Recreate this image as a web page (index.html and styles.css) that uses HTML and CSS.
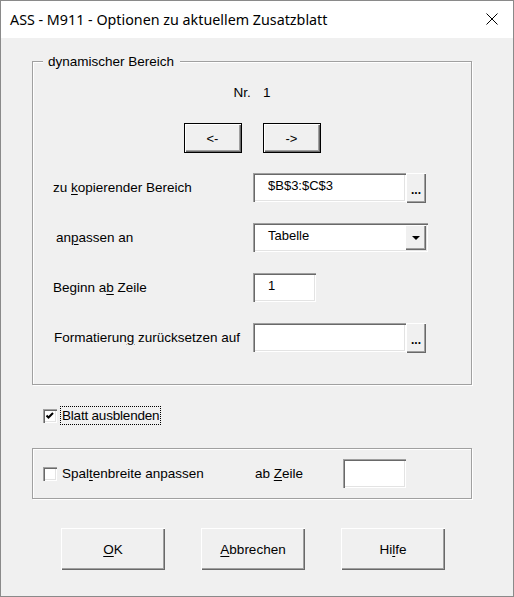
FILE: index.html
```html
<!DOCTYPE html>
<html lang="de">
  <head>
    <meta charset="UTF-8" />
    <title>ASS - M911 - Optionen zu aktuellem Zusatzblatt</title>
    <link rel="stylesheet" href="styles.css">
  </head>
  <body>
    <div class="window">
      <!-- Title bar -->
      <div class="titlebar">
        <span class="title">ASS - M911 - Optionen zu aktuellem Zusatzblatt</span>
        <svg class="close" width="12" height="12" viewBox="0 0 12 12">
          <path d="M0.5 0.5 L11.5 11.5 M11.5 0.5 L0.5 11.5" stroke="#000" stroke-width="1" fill="none" />
        </svg>
      </div>

      <div class="client">
        <!-- dynamischer Bereich -->
        <div class="frame frame-main">
          <span class="legend">dynamischer Bereich</span>

          <div class="nr-row">
            <span>Nr.</span>
            <span>1</span>
          </div>

          <div class="nav-row">
            <button class="btn btn-framed nav-btn">&lt;-</button>
            <button class="btn btn-framed nav-btn">-&gt;</button>
          </div>

          <div class="form-grid">
            <label class="label">zu <u>k</u>opierender Bereich</label>
            <div class="field-group">
              <div class="sunken textbox textbox-wide">$B$3:$C$3</div>
              <button class="btn dots-btn">...</button>
            </div>

            <label class="label label-shift3">an<u>p</u>assen an</label>
            <div class="sunken combo">
              <span class="combo-text">Tabelle</span>
              <span class="btn combo-btn"><span class="arrow"></span></span>
            </div>

            <label class="label">Beginn a<u>b</u> Zeile</label>
            <div class="sunken textbox textbox-small">1</div>

            <label class="label label-shift1">Formatierun<u>g</u> zurücksetzen auf</label>
            <div class="field-group">
              <div class="sunken textbox textbox-wide"></div>
              <button class="btn dots-btn">...</button>
            </div>
          </div>
        </div>

        <!-- Blatt ausblenden -->
        <div class="check-row">
          <span class="sunken checkbox">
            <svg width="10" height="10" viewBox="0 0 10 10">
              <polyline points="1.5,4.5 3.5,6.5 8,2" stroke="#000" stroke-width="2" fill="none" />
            </svg>
          </span>
          <span class="focus-label">Blatt ausblenden</span>
        </div>

        <!-- Spaltenbreite -->
        <div class="frame frame-cols">
          <span class="sunken checkbox"></span>
          <span class="cols-label">Spal<u>t</u>enbreite anpassen</span>
          <span class="zeile-label">ab <u>Z</u>eile</span>
          <div class="sunken textbox textbox-small"></div>
        </div>

        <!-- Dialog buttons -->
        <div class="button-row">
          <button class="btn dialog-btn"><u>O</u>K</button>
          <button class="btn dialog-btn"><u>A</u>bbrechen</button>
          <button class="btn dialog-btn">Hi<u>l</u>fe</button>
        </div>
      </div>
    </div>
  </body>
</html>
```

FILE: styles.css
```css
/* Reset */
* {
  margin: 0;
  padding: 0;
  box-sizing: border-box;
}

body {
  font-family: "Liberation Sans", Arial, sans-serif;
  font-size: 13.5px;
  color: #000;
  background: #fff;
}

u {
  text-decoration: underline;
  text-underline-offset: 2px;
}

.window {
  width: 514px;
  height: 597px;
  border: 1px solid #8a8a8a;
  display: flex;
  flex-direction: column;
}

.titlebar {
  height: 37px;
  background: #fff;
  display: flex;
  align-items: center;
  padding-left: 9px;
}

.title {
  font-family: "Noto Sans", sans-serif;
  font-size: 14.3px;
}

.close {
  margin-left: auto;
  margin-right: 15px;
  align-self: flex-start;
  margin-top: 12px;
}

.client {
  flex: 1;
  background: #f0f0f0;
  padding: 23px 0 0 31px;
}

/* Etched group frame */
.frame {
  position: relative;
  width: 440px;
  border: 1px solid #a0a0a0;
  box-shadow: inset 1px 1px #fff, 1px 1px #fff;
}

.frame-main {
  height: 324px;
  padding-top: 23px;
}

.legend {
  position: absolute;
  top: -8px;
  left: 10px;
  padding: 0 6px 0 5px;
  line-height: 16px;
  background: #f0f0f0;
}

.nr-row {
  display: flex;
  justify-content: center;
  gap: 12px;
  line-height: 16px;
}

.nav-row {
  display: flex;
  justify-content: center;
  gap: 21px;
  margin-top: 22px;
}

/* Buttons */
.btn {
  font: inherit;
  color: #000;
  border: none;
  background: #f0f0f0;
  box-shadow: inset 1px 1px #fff, inset -1px -1px #696969, inset -2px -2px #a0a0a0;
}

.btn-framed {
  border: 1px solid #000;
}

.nav-btn {
  width: 58px;
  height: 30px;
  font-size: 13px;
}

.dots-btn {
  width: 20px;
  height: 30px;
  font-size: 12px;
  font-weight: bold;
  line-height: 12px;
  display: flex;
  justify-content: center;
  align-items: flex-start;
  padding-top: 11px;
}

.dialog-btn {
  width: 104px;
  height: 42px;
}

/* Form rows */
.form-grid {
  display: grid;
  grid-template-columns: 200px auto;
  grid-auto-rows: 29px;
  row-gap: 21px;
  align-items: center;
  margin: 20px 0 0 20px;
}

.label {
  line-height: 16px;
}

.label-shift3 {
  padding-left: 3px;
}

.label-shift1 {
  padding-left: 1px;
}

.field-group {
  display: flex;
  align-items: flex-start;
  height: 29px;
}

/* Sunken fields */
.sunken {
  background: #fff;
  box-shadow: inset 1px 1px #a0a0a0, inset 2px 2px #696969, inset -1px -1px #fff, inset -2px -2px #e3e3e3;
}

.textbox {
  height: 29px;
  padding: 5px 0 0 15px;
  font-size: 13px;
  line-height: 16px;
}

.textbox-wide {
  width: 153px;
}

.textbox-small {
  width: 63px;
}

.combo {
  display: flex;
  width: 175px;
  height: 29px;
  padding: 2px;
  font-size: 13px;
  line-height: 16px;
}

.combo-text {
  flex: 1;
  padding: 3px 0 0 13px;
}

.combo-btn {
  width: 21px;
  height: 25px;
  display: flex;
  justify-content: center;
  align-items: center;
}

.arrow {
  width: 0;
  height: 0;
  border-left: 4px solid transparent;
  border-right: 4px solid transparent;
  border-top: 4px solid #000;
  margin-top: 1px;
}

/* Checkboxes */
.check-row {
  display: flex;
  align-items: center;
  height: 19px;
  margin-top: 21px;
  padding-left: 11px;
}

.checkbox {
  width: 14px;
  height: 14px;
  display: flex;
  justify-content: center;
  align-items: center;
}

.focus-label {
  margin-left: 3px;
  border: 1px dotted #000;
  padding: 0 1px;
  line-height: 17px;
  letter-spacing: -0.2px;
}

.frame-cols {
  height: 51px;
  margin-top: 23px;
  display: flex;
  align-items: center;
  padding-left: 10px;
}

.cols-label {
  width: 198px;
  padding-left: 5px;
}

.zeile-label {
  width: 88px;
}

.button-row {
  display: flex;
  justify-content: center;
  gap: 36px;
  width: 440px;
  margin-top: 29px;
  padding-left: 2px;
}
```
